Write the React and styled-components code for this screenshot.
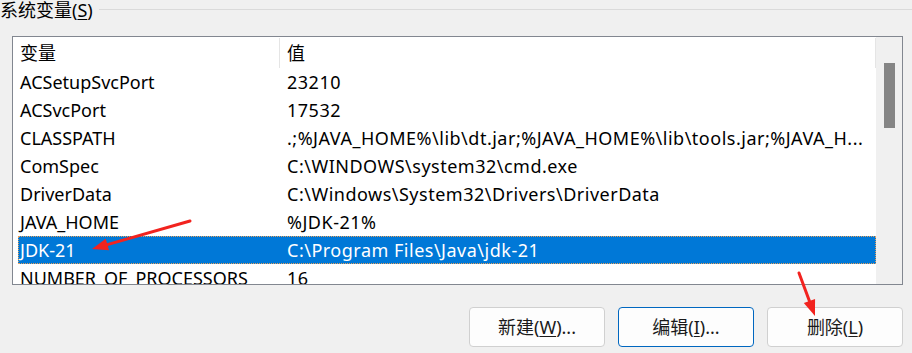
import styled, { createGlobalStyle } from 'styled-components';

const GlobalStyle = createGlobalStyle`
    html, body {
        margin: 0;
        padding: 0;
        background: #f0f0f0;
    }
    body {
        font-family: "Noto Sans", "Noto Sans CJK SC", sans-serif;
        font-size: 18px;
        color: #000;
    }
`;

const Page = styled.div`
    position: relative;
    width: 912px;
    height: 353px;
    padding: 0 9px 0 12px;
    box-sizing: border-box;
    overflow: hidden;
`;

const GroupHeader = styled.div`
    display: flex;
    align-items: flex-start;
    height: 22px;
    margin-left: -12px;
    margin-right: -9px;
`;

const GroupLabel = styled.span`
    line-height: 22px;
    margin-top: -1px;
    white-space: nowrap;
    padding-right: 6px;
`;

const GroupLine = styled.div`
    flex: 1;
    height: 1px;
    margin-top: 9px;
    background: #dadada;
`;

const Key = styled.span`
    text-decoration: underline;
    text-underline-offset: 2px;
    text-decoration-thickness: 1px;
`;

const ListBox = styled.div`
    margin-top: 14px;
    height: 249px;
    box-sizing: border-box;
    border: 1px solid #828790;
    background: #fff;
    display: flex;
    overflow: hidden;
`;

const ListContent = styled.div`
    flex: 1;
    min-width: 0;
    display: flex;
    flex-direction: column;
`;

const HeaderRow = styled.div`
    display: flex;
    height: 31px;
    flex-shrink: 0;
`;

const HeaderCell = styled.div`
    box-sizing: border-box;
    ${({ $width }) => ($width ? `width: ${$width}px;` : 'flex: 1;')}
    padding-left: ${({ $pad }) => $pad}px;
    margin-top: 1px;
    line-height: 30px;
    border-right: 1px solid #e5e5e5;
`;

const Row = styled.div`
    display: flex;
    height: 28px;
    flex-shrink: 0;
    margin-left: 5px;
    line-height: 28px;
    white-space: nowrap;
    background: ${({ $selected }) => ($selected ? '#0078d7' : 'transparent')};
    color: ${({ $selected }) => ($selected ? '#fff' : '#000')};
    outline: ${({ $selected }) => ($selected ? '1px dotted #e8a05a' : 'none')};
    outline-offset: -1px;
`;

const NameCell = styled.div`
    width: 261px;
    padding-left: 2px;
    box-sizing: border-box;
    overflow: hidden;
`;

const ValueCell = styled.div`
    flex: 1;
    min-width: 0;
    padding-left: 8px;
    overflow: hidden;
    letter-spacing: 0.5px;
`;

const ScrollTrack = styled.div`
    width: 26px;
    flex-shrink: 0;
    background: #f0f0f0;
    display: flex;
    justify-content: center;
`;

const ScrollThumb = styled.div`
    width: 11px;
    height: 65px;
    margin-top: 26px;
    background: #858585;
`;

const ButtonRow = styled.div`
    display: flex;
    justify-content: flex-end;
    gap: 13px;
    margin-top: 22px;
`;

const Button = styled.button`
    width: 136px;
    height: 40px;
    box-sizing: border-box;
    border: 1px solid ${({ $default }) => ($default ? '#0067c0' : '#d0d0d0')};
    border-radius: 4px;
    background: #fdfdfd;
    font-family: "Noto Sans", "Noto Sans CJK SC", sans-serif;
    font-size: 18px;
    color: #1a1a1a;
    padding: 0;
    line-height: 38px;
`;

const Annotations = styled.svg`
    position: absolute;
    left: 0;
    top: 0;
    pointer-events: none;
`;

const rows = [
    ['ACSetupSvcPort', '23210'],
    ['ACSvcPort', '17532'],
    ['CLASSPATH', '.;%JAVA_HOME%\\lib\\dt.jar;%JAVA_HOME%\\lib\\tools.jar;%JAVA_H...'],
    ['ComSpec', 'C:\\WINDOWS\\system32\\cmd.exe'],
    ['DriverData', 'C:\\Windows\\System32\\Drivers\\DriverData'],
    ['JAVA_HOME', '%JDK-21%'],
    ['JDK-21', 'C:\\Program Files\\Java\\jdk-21', true],
    ['NUMBER_OF_PROCESSORS', '16'],
];

function Arrow({ x1, y1, x2, y2 }) {
    const dx = x2 - x1;
    const dy = y2 - y1;
    const len = Math.hypot(dx, dy);
    const ux = dx / len;
    const uy = dy / len;
    const headLen = 16;
    const headW = 6;
    const bx = x2 - ux * headLen;
    const by = y2 - uy * headLen;
    const pts = [
        [x2, y2],
        [bx - uy * headW, by + ux * headW],
        [bx + uy * headW, by - ux * headW],
    ]
        .map((p) => p.join(','))
        .join(' ');
    return (
        <g>
            <line x1={x1} y1={y1} x2={bx} y2={by} stroke="#f2231f" strokeWidth="3" strokeLinecap="round" />
            <polygon points={pts} fill="#f2231f" />
        </g>
    );
}

export default function App() {
    return (
        <>
            <GlobalStyle />
            <Page>
                <GroupHeader>
                    <GroupLabel>
                        系统变量(<Key>S</Key>)
                    </GroupLabel>
                    <GroupLine />
                </GroupHeader>
                <ListBox>
                    <ListContent>
                        <HeaderRow>
                            <HeaderCell $width={267} $pad={7}>变量</HeaderCell>
                            <HeaderCell $pad={7}>值</HeaderCell>
                        </HeaderRow>
                        {rows.map(([name, value, selected]) => (
                            <Row key={name} $selected={selected}>
                                <NameCell>{name}</NameCell>
                                <ValueCell>{value}</ValueCell>
                            </Row>
                        ))}
                    </ListContent>
                    <ScrollTrack>
                        <ScrollThumb />
                    </ScrollTrack>
                </ListBox>
                <ButtonRow>
                    <Button>
                        新建(<Key>W</Key>)...
                    </Button>
                    <Button $default>
                        编辑(<Key>I</Key>)...
                    </Button>
                    <Button>
                        删除(<Key>L</Key>)
                    </Button>
                </ButtonRow>
                <Annotations width="912" height="353" viewBox="0 0 912 353">
                    <Arrow x1={190} y1={221} x2={92} y2={249} />
                    <Arrow x1={799} y1={273} x2={815} y2={316} />
                </Annotations>
            </Page>
        </>
    );
}
